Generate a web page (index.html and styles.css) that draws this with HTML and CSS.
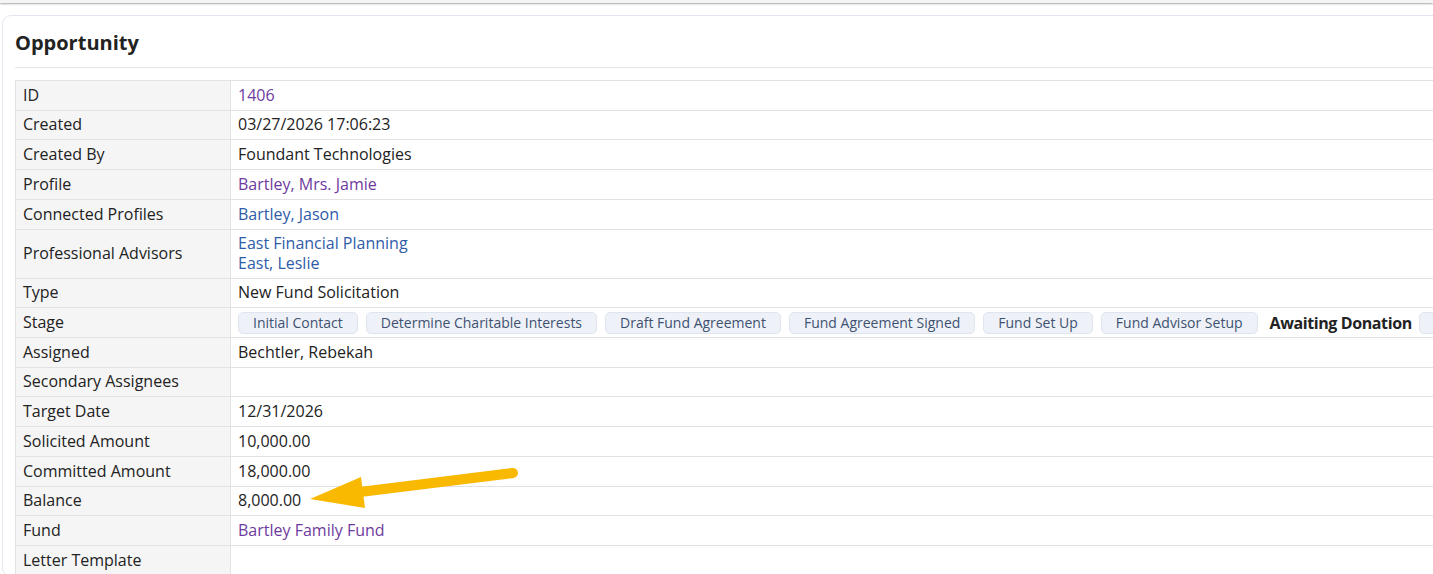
FILE: index.html
```html
<!DOCTYPE html>
<html lang="en">
<head>
  <meta charset="UTF-8" />
  <title>Opportunity</title>
  <link rel="stylesheet" href="styles.css">
</head>
<body>
  <div class="topbar"></div>

  <div class="card">
    <h2 class="card-title">Opportunity</h2>

    <table class="details">
      <tr><th>ID</th><td><a class="visited" href="#">1406</a></td></tr>
      <tr><th>Created</th><td>03/27/2026 17:06:23</td></tr>
      <tr><th>Created By</th><td>Foundant Technologies</td></tr>
      <tr><th>Profile</th><td><a class="visited" href="#">Bartley, Mrs. Jamie</a></td></tr>
      <tr><th>Connected Profiles</th><td><a href="#">Bartley, Jason</a></td></tr>
      <tr><th>Professional Advisors</th><td><a href="#">East Financial Planning</a><br><a href="#">East, Leslie</a></td></tr>
      <tr><th>Type</th><td>New Fund Solicitation</td></tr>
      <tr>
        <th>Stage</th>
        <td class="stages">
          <span class="stage">Initial Contact</span>
          <span class="stage">Determine Charitable Interests</span>
          <span class="stage">Draft Fund Agreement</span>
          <span class="stage">Fund Agreement Signed</span>
          <span class="stage">Fund Set Up</span>
          <span class="stage">Fund Advisor Setup</span>
          <span class="stage current">Awaiting Donation</span>
          <span class="stage">Stewardship</span>
        </td>
      </tr>
      <tr><th>Assigned</th><td>Bechtler, Rebekah</td></tr>
      <tr><th>Secondary Assignees</th><td></td></tr>
      <tr><th>Target Date</th><td>12/31/2026</td></tr>
      <tr><th>Solicited Amount</th><td>10,000.00</td></tr>
      <tr><th>Committed Amount</th><td>18,000.00</td></tr>
      <tr><th>Balance</th><td>8,000.00</td></tr>
      <tr><th>Fund</th><td><a class="visited" href="#">Bartley Family Fund</a></td></tr>
      <tr><th>Letter Template</th><td></td></tr>
    </table>
  </div>

  <!-- annotation arrow drawn over the screenshot -->
  <svg class="arrow" width="230" height="50" viewBox="0 0 230 50">
    <line x1="205" y1="7" x2="52" y2="26" stroke="#f9b900" stroke-width="10" stroke-linecap="round" />
    <polygon points="2,33 53,11 57,42" fill="#f9b900" />
  </svg>
</body>
</html>
```

FILE: styles.css
```css
body {
  margin: 0;
  font-family: "Open Sans", Arial, sans-serif;
  font-size: 16px;
  color: #222;
  background-color: #fff;
  overflow: hidden;
  position: relative;
}
.topbar {
  height: 3px;
  background-color: #f4f4f4;
  box-shadow: 0 1px 2px #a9a9a9;
}
.card {
  width: max-content;
  min-width: 1500px;
  margin: 12px 0 0 2px;
  padding: 12px 12px 0 12px;
  border: 1px solid #e2e6ee;
  border-radius: 9px;
}
.card-title {
  margin: 0;
  padding: 1px 0 11px 0;
  font-size: 20px;
  font-weight: bold;
  color: #222;
  border-bottom: 1px solid #e4e6ea;
}
.details {
  margin-top: 12px;
  border-collapse: collapse;
  width: 100%;
  line-height: 1.2;
}
.details th,
.details td {
  border: 1px solid #e2e2e2;
  padding: 4.77px 7px;
  text-align: left;
  vertical-align: middle;
}
.details th {
  width: 200px;
  font-weight: normal;
  background-color: #f5f5f5;
}
.details td {
  height: 19px;
}
a {
  color: #2f5ba8;
  text-decoration: none;
}
a.visited {
  color: #6e3a9e;
}
.details td.stages {
  white-space: nowrap;
  font-size: 0;
  line-height: 0;
  padding-top: 3.4px;
  padding-bottom: 3.4px;
}
.stage {
  display: inline-block;
  vertical-align: top;
  font-size: 14px;
  line-height: 20px;
  padding: 0 14px;
  margin-right: 8px;
  color: #3f5170;
  background-color: #eef2f8;
  border: 1px solid #dfe5ee;
  border-radius: 5px;
}
.stage.current {
  padding: 0 0 0 3px;
  margin-right: 6px;
  font-size: 16px;
  font-weight: bold;
  letter-spacing: -0.4px;
  color: #222;
  background: none;
  border-color: transparent;
}
.arrow {
  position: absolute;
  left: 308px;
  top: 466px;
}
```
